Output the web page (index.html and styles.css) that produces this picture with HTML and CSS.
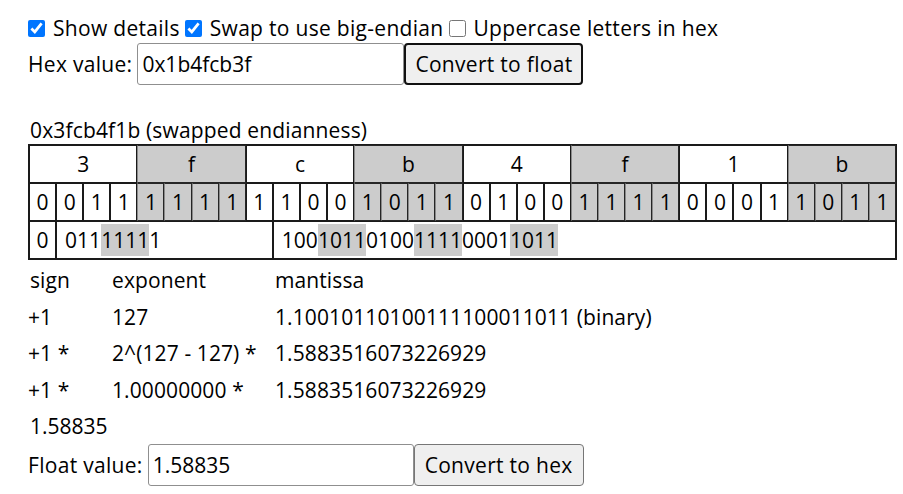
FILE: index.html
```html
<!DOCTYPE html>
<html>
<head>
<meta charset="utf-8">
<link rel="stylesheet" href="styles.css">
</head>
<body>
<div class="page">
  <div class="opts">
    <label class="opt"><input type="checkbox" class="cb" checked> Show details</label>
    <label class="opt"><input type="checkbox" class="cb" checked> Swap to use big-endian</label>
    <label class="opt"><input type="checkbox" class="cb"> Uppercase letters in hex</label>
  </div>
  <div class="row hexrow">
    <span class="lbl">Hex value:</span>
    <input class="field hexfield" type="text" value="0x1b4fcb3f">
    <button class="btn focused">Convert to float</button>
  </div>
  <div class="swapped">0x3fcb4f1b (swapped endianness)</div>
  <table class="bits">
    <tr class="hexr">
      <td colspan="4">3</td><td colspan="4" class="sh">f</td><td colspan="4">c</td><td colspan="4" class="sh">b</td>
      <td colspan="4">4</td><td colspan="4" class="sh">f</td><td colspan="4">1</td><td colspan="4" class="sh">b</td>
    </tr>
    <tr class="bitr">
      <td>0</td><td>0</td><td>1</td><td>1</td>
      <td class="sh">1</td><td class="sh">1</td><td class="sh">1</td><td class="sh">1</td>
      <td>1</td><td>1</td><td>0</td><td>0</td>
      <td class="sh">1</td><td class="sh">0</td><td class="sh">1</td><td class="sh">1</td>
      <td>0</td><td>1</td><td>0</td><td>0</td>
      <td class="sh">1</td><td class="sh">1</td><td class="sh">1</td><td class="sh">1</td>
      <td>0</td><td>0</td><td>0</td><td>1</td>
      <td class="sh">1</td><td class="sh">0</td><td class="sh">1</td><td class="sh">1</td>
    </tr>
    <tr class="fieldr">
      <td class="sign">0</td>
      <td colspan="8" class="txt">011<span class="hl">1111</span>1</td>
      <td colspan="23" class="txt">100<span class="hl">1011</span>0100<span class="hl">1111</span>0001<span class="hl">1011</span></td>
    </tr>
  </table>
  <table class="parts">
    <tr><td class="c1">sign</td><td class="c2">exponent</td><td>mantissa</td></tr>
    <tr><td>+1</td><td>127</td><td>1.10010110100111100011011 (binary)</td></tr>
    <tr><td>+1 *</td><td>2^(127 - 127) *</td><td>1.5883516073226929</td></tr>
    <tr><td>+1 *</td><td>1.00000000 *</td><td>1.5883516073226929</td></tr>
  </table>
  <div class="result">1.58835</div>
  <div class="row floatrow">
    <span class="lbl">Float value:</span>
    <input class="field floatfield" type="text" value="1.58835">
    <button class="btn">Convert to hex</button>
  </div>
</div>
</body>
</html>
```

FILE: styles.css
```css
html, body {
  margin: 0;
  padding: 0;
  background: #fff;
}
body {
  font-family: "Open Sans", "Noto Sans", sans-serif;
  font-size: 21px;
  color: #000;
}
.page {
  padding: 14px 0 0 28px;
}
.opts {
  display: flex;
  align-items: center;
  height: 28px;
  letter-spacing: 0.3px;
}
.opt {
  display: flex;
  align-items: center;
  margin-right: 5px;
}
.cb {
  width: 17px;
  height: 17px;
  margin: 0 8px 0 0;
  accent-color: #0075ff;
}
.row {
  display: flex;
  align-items: center;
  height: 42px;
}
.hexrow {
  margin-top: 1px;
}
.lbl {
  margin-right: 5px;
  letter-spacing: 0.3px;
}
.field {
  box-sizing: border-box;
  height: 42px;
  border: 1px solid #8f8f8f;
  border-radius: 3px;
  padding: 0 4px;
  font-family: inherit;
  font-size: 21px;
  color: #000;
}
.hexfield {
  width: 267px;
}
.floatfield {
  width: 266px;
}
.btn {
  box-sizing: border-box;
  height: 42px;
  border: 1px solid #767676;
  border-radius: 4px;
  background: #efefef;
  padding: 0 10px;
  font-family: inherit;
  font-size: 21px;
  letter-spacing: 0.3px;
  color: #000;
}
.btn.focused {
  border: 2px solid #111;
  padding: 0 9px;
}
.swapped {
  margin-top: 31px;
  height: 28px;
  line-height: 28px;
  padding-left: 2px;
  letter-spacing: 0.15px;
}
.bits {
  width: 869px;
  table-layout: fixed;
  border-collapse: separate;
  border-spacing: 0;
  border: 1px solid #1a1a1a;
}
.bits td {
  border: 1px solid #1a1a1a;
  padding: 0;
  height: 36px;
  text-align: center;
  line-height: 26px;
}
.bits td.sh {
  background: #cccccc;
  border-color: #262626 #262626 #262626 #8a8a8a;
}
.bits td.txt {
  text-align: left;
  padding-left: 8px;
}
.hl {
  background: #cccccc;
  padding: 2px 0;
}
.parts {
  margin-top: 2px;
  border-collapse: collapse;
  letter-spacing: 0.1px;
}
.parts td {
  padding: 0;
  height: 36.5px;
  white-space: nowrap;
}
.parts td.c1 {
  width: 82px;
  padding-left: 2px;
}
.parts td.c2 {
  width: 163px;
}
.result {
  height: 36px;
  line-height: 36px;
  padding-left: 2px;
}
```
